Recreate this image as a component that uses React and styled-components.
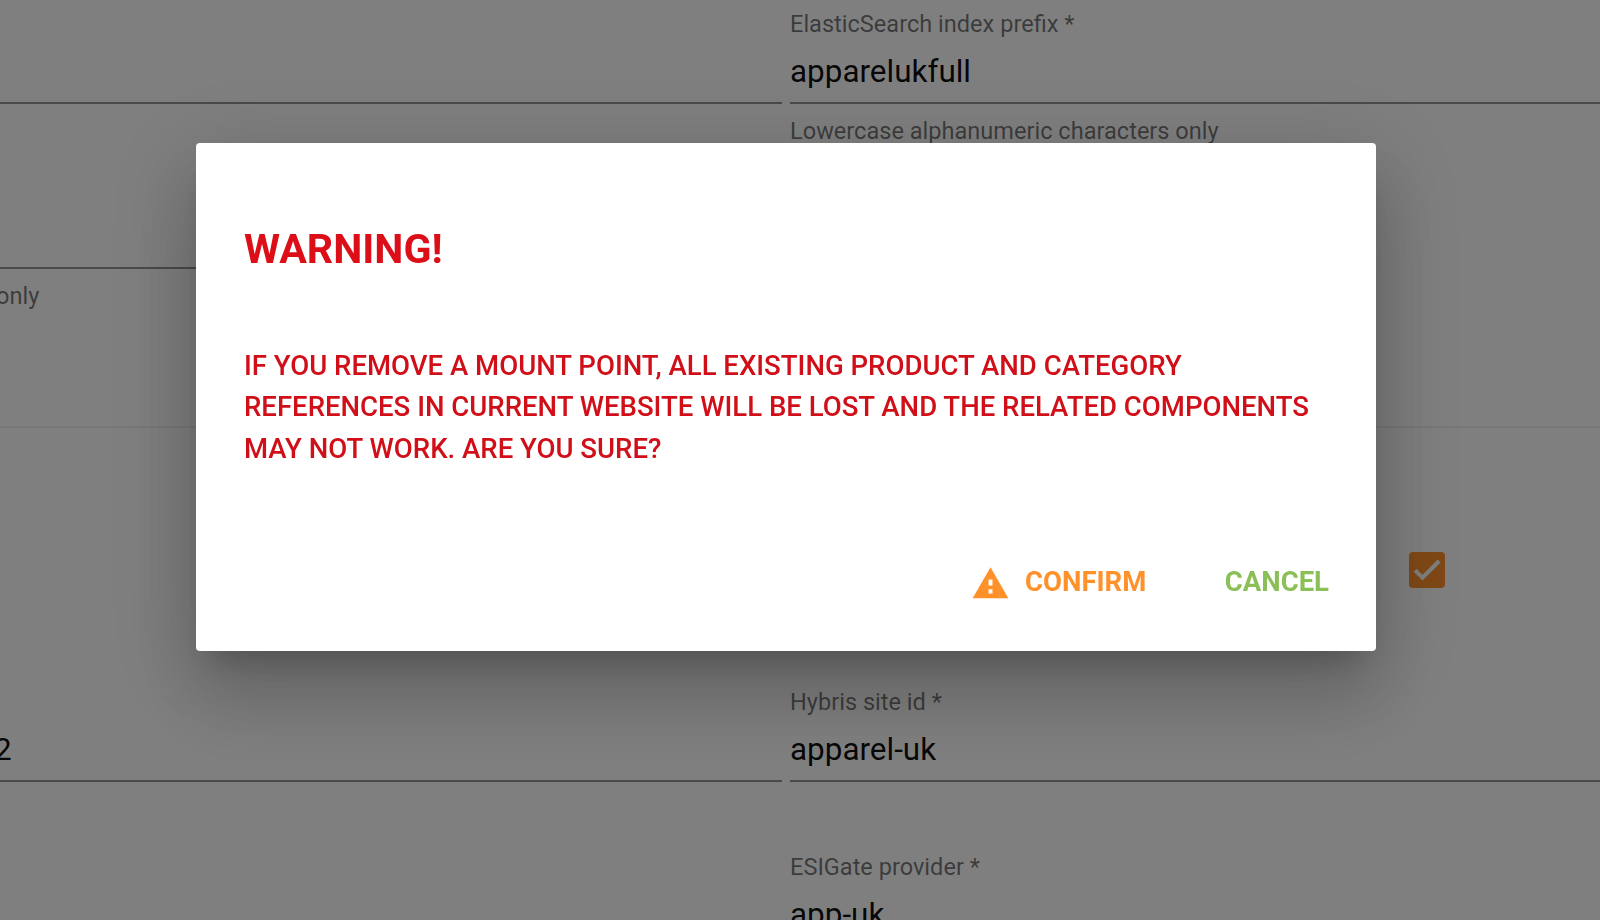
import React, { useState } from 'react'
import styled, { createGlobalStyle } from 'styled-components'

const GlobalStyle = createGlobalStyle`
  body {
    margin: 0;
    overflow: hidden;
    background: #fff;
    font-family: Roboto, 'Liberation Sans', sans-serif;
  }
`

const FormField = ({ label, value, hint, shift }) => (
    <Field $shift={shift}>
        <Label>{label}</Label>
        <Value>{value}</Value>
        <Underline />
        {hint && <Hint>{hint}</Hint>}
    </Field>
)

const WarningIcon = () => (
    <Icon viewBox="0 0 24 24">
        <path fill="currentColor" d="M1 21h22L12 2 1 21zm12.2-2.9h-2.4v-2.6h2.4v2.6zm0-4.9h-2.4V9.6h2.4v3.6z" />
    </Icon>
)

const WarningDialog = () => (
    <Dialog role="dialog">
        <Title>WARNING!</Title>
        <Message>
            IF YOU REMOVE A MOUNT POINT, ALL EXISTING PRODUCT AND CATEGORY REFERENCES IN CURRENT
            WEBSITE WILL BE LOST AND THE RELATED COMPONENTS MAY NOT WORK. ARE YOU SURE?
        </Message>
        <Actions>
            <Button $color="#ff912b">
                <WarningIcon />
                CONFIRM
            </Button>
            <Button $color="#8bbf58">CANCEL</Button>
        </Actions>
    </Dialog>
)

const App = () => {
    const [checked, setChecked] = useState(true)
    return (
        <>
            <GlobalStyle />
            <Page>
                <Section $height="426px">
                    <Row>
                        <FormField />
                        <FormField
                            label="ElasticSearch index prefix *"
                            value="apparelukfull"
                            hint="Lowercase alphanumeric characters only"
                        />
                    </Row>
                    <Row>
                        <FormField hint="only" shift="-4px" />
                    </Row>
                </Section>
                <Divider />
                <CheckRow>
                    <Checkbox onClick={() => setChecked(!checked)}>
                        {checked && (
                            <svg width="36" height="36" viewBox="0 0 24 24">
                                <path d="M4.1 12.2 9 17.1 20.1 6" fill="none" stroke="#fff" strokeWidth="2.67" />
                            </svg>
                        )}
                    </Checkbox>
                </CheckRow>
                <Row>
                    <FormField value="2" shift="-6px" />
                    <FormField label="Hybris site id *" value="apparel-uk" />
                </Row>
                <Row>
                    <Blank />
                    <FormField label="ESIGate provider *" value="app-uk" />
                </Row>
            </Page>
            <Backdrop>
                <WarningDialog />
            </Backdrop>
        </>
    )
}

const Page = styled.div`
    width: 1600px;
    height: 920px;
    overflow: hidden;
    display: flex;
    flex-direction: column;
    & > * {
        flex-shrink: 0;
    }
`
const Section = styled.section`
    height: ${({ $height }) => $height};
`
const Row = styled.div`
    display: grid;
    grid-template-columns: 782px 1fr;
    column-gap: 8px;
    height: 165px;
`
const Field = styled.div`
    padding-top: 10px;
    white-space: nowrap;
    & > p {
        margin-left: ${({ $shift }) => $shift || 0};
    }
`
const Blank = styled.div``
const Label = styled.p`
    margin: 0;
    height: 28px;
    line-height: 29px;
    font-size: 23.57px;
    color: rgba(0, 0, 0, 0.54);
`
const Value = styled.p`
    margin: 15.5px 0 12.5px;
    height: 36px;
    line-height: 36px;
    font-size: 31.45px;
    color: rgba(0, 0, 0, 0.95);
`
const Underline = styled.div`
    height: 2px;
    background: rgba(0, 0, 0, 0.42);
`
const Hint = styled(Label)`
    margin-top: 13px;
`
const Divider = styled.div`
    height: 2px;
    background: rgba(0, 0, 0, 0.06);
`
const CheckRow = styled.div`
    display: flex;
    height: 126px;
    padding: 124px 155px 0 0;
    justify-content: flex-end;
`
const Checkbox = styled.div`
    width: 36px;
    height: 36px;
    border-radius: 4px;
    background: #ff912b;
    cursor: pointer;
    svg {
        display: block;
    }
`
const Backdrop = styled.div`
    position: fixed;
    inset: 0;
    box-sizing: border-box;
    padding: 143px 0 0 196px;
    background: rgba(0, 0, 0, 0.5);
`
const Dialog = styled.div`
    box-sizing: border-box;
    width: 1180px;
    height: 508px;
    padding: 82px 47px 0 48px;
    border-radius: 4px;
    background: #fff;
    box-shadow: 0 22px 30px -14px rgba(0, 0, 0, 0.2), 0 47px 75px 6px rgba(0, 0, 0, 0.14),
        0 18px 90px 16px rgba(0, 0, 0, 0.12);
`
const Title = styled.h2`
    margin: 0;
    font-size: 41.2px;
    line-height: 48px;
    font-weight: 700;
    color: #dc0f19;
`
const Message = styled.p`
    margin: 72px 0 0;
    font-size: 27.55px;
    line-height: 41.35px;
    font-weight: 500;
    color: #d00f18;
`
const Actions = styled.div`
    display: flex;
    justify-content: flex-end;
    gap: 78.5px;
    margin-top: 93px;
`
const Button = styled.button`
    display: flex;
    align-items: center;
    gap: 15px;
    height: 40px;
    padding: 0;
    border: none;
    background: none;
    font-family: inherit;
    font-size: 27.5px;
    line-height: 40px;
    font-weight: 700;
    color: ${({ $color }) => $color};
    cursor: pointer;
`
const Icon = styled.svg`
    width: 39px;
    height: 39px;
    margin-top: 2px;
`

export default App
